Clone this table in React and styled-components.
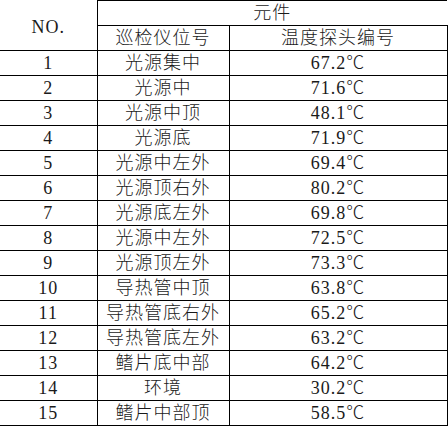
import styled, { createGlobalStyle } from "styled-components";

const GlobalStyle = createGlobalStyle`
  html, body {
    margin: 0;
    padding: 0;
    background: #fff;
  }
`;

const rows = [
  ["1", "光源集中", "67.2℃"],
  ["2", "光源中", "71.6℃"],
  ["3", "光源中顶", "48.1℃"],
  ["4", "光源底", "71.9℃"],
  ["5", "光源中左外", "69.4℃"],
  ["6", "光源顶右外", "80.2℃"],
  ["7", "光源底左外", "69.8℃"],
  ["8", "光源中左外", "72.5℃"],
  ["9", "光源顶左外", "73.3℃"],
  ["10", "导热管中顶", "63.8℃"],
  ["11", "导热管底右外", "65.2℃"],
  ["12", "导热管底左外", "63.2℃"],
  ["13", "鳍片底中部", "64.2℃"],
  ["14", "环境", "30.2℃"],
  ["15", "鳍片中部顶", "58.5℃"],
];

const Table = styled.table`
  border-collapse: collapse;
  table-layout: fixed;
  width: 447px;
  font-family: "Liberation Serif", "Noto Sans CJK SC", serif;
  font-size: 18px;
  font-weight: 300;
  color: #1a1a1a;
`;

const Cell = styled.td`
  height: 24px;
  padding: ${(p) => (p.$low ? "4px 0 0" : "0")};
  text-align: center;
  vertical-align: middle;
  line-height: 24px;
  white-space: nowrap;
  letter-spacing: 1px;
  border: 1px solid #000;
  border-left: ${(p) => (p.$first ? "none" : "1px solid #000")};
  border-top: ${(p) => (p.$noTop ? "none" : "1px solid #000")};
  border-right: ${(p) => (p.$noRight ? "none" : "1px solid #000")};
`;

export default function App() {
  return (
    <>
      <GlobalStyle />
      <Table>
        <colgroup>
          <col style={{ width: 97 }} />
          <col style={{ width: 132 }} />
          <col style={{ width: 218 }} />
        </colgroup>
        <tbody>
          <tr>
            <Cell rowSpan={2} $first $noTop $low>
              NO.
            </Cell>
            <Cell colSpan={2} $noRight>
              元件
            </Cell>
          </tr>
          <tr>
            <Cell>巡检仪位号</Cell>
            <Cell>温度探头编号</Cell>
          </tr>
          {rows.map(([no, pos, temp]) => (
            <tr key={no}>
              <Cell $first>{no}</Cell>
              <Cell>{pos}</Cell>
              <Cell>{temp}</Cell>
            </tr>
          ))}
        </tbody>
      </Table>
    </>
  );
}
